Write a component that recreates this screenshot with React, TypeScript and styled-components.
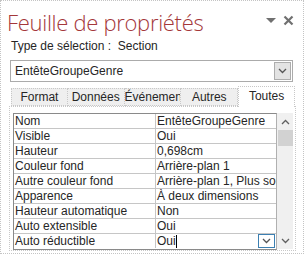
import React from "react";
import styled, { createGlobalStyle } from "styled-components";

const Global = createGlobalStyle`
  html, body { margin: 0; padding: 0; background: #ffffff; }
  body { font-family: "Liberation Sans", Arial, sans-serif; }
`;

const Window = styled.div`
  box-sizing: border-box;
  width: 304px;
  height: 254px;
  border: 1px dotted #c4c4c4;
  background: #ffffff;
  display: flex;
  flex-direction: column;
  color: #262626;
`;

const Header = styled.div`
  display: flex;
  align-items: flex-start;
  justify-content: space-between;
  padding: 8px 9px 0 6px;
  height: 27px;
`;

const Title = styled.div`
  font-family: "Open Sans", "Liberation Sans", sans-serif;
  font-weight: 300;
  font-size: 22px;
  line-height: 26px;
  color: #a4373a;
  letter-spacing: -0.3px;
  white-space: nowrap;
`;

const HeaderIcons = styled.div`
  display: flex;
  align-items: center;
  gap: 7px;
  padding-top: 6px;
`;

const SelType = styled.div`
  font-size: 12px;
  line-height: 14px;
  padding-left: 10px;
  margin-top: 3px;
  white-space: pre;
`;

const Combo = styled.div`
  box-sizing: border-box;
  margin: 7px 10px 0 9px;
  height: 22px;
  border: 1px solid #ababab;
  display: flex;
  align-items: center;
  padding: 0 1px 0 4px;
`;

const ComboText = styled.div`
  flex: 1;
  font-size: 12px;
`;

const ComboButton = styled.div`
  box-sizing: border-box;
  width: 17px;
  height: 18px;
  background: #e3e3e3;
  border: 1px solid #adadad;
  display: flex;
  align-items: center;
  justify-content: center;
`;

const TabStrip = styled.div`
  display: flex;
  margin: 4px 8px 0 10px;
  height: 20px;
  align-items: flex-end;
`;

const Tab = styled.div<{ $active?: boolean }>`
  box-sizing: border-box;
  width: 57px;
  height: ${(p) => (p.$active ? "21px" : "18px")};
  margin-bottom: ${(p) => (p.$active ? "-1px" : "0")};
  background: ${(p) => (p.$active ? "#ffffff" : "#efefef")};
  border: 1px dotted #c8c8c8;
  border-bottom: ${(p) => (p.$active ? "none" : "1px dotted #c8c8c8")};
  border-left: ${(p) => (p.$active ? "1px dotted #c8c8c8" : "none")};
  font-size: 12px;
  line-height: ${(p) => (p.$active ? "18px" : "16px")};
  text-align: center;
  white-space: nowrap;
  overflow: hidden;
  position: relative;
  z-index: ${(p) => (p.$active ? 1 : 0)};
  &:first-child { border-left: 1px dotted #c8c8c8; }
`;

const Panel = styled.div`
  box-sizing: border-box;
  margin: 0 7px 0 8px;
  height: 145px;
  border: 1px dotted #c8c8c8;
  padding: 6px 2px 0 3px;
  display: flex;
`;

const PropTable = styled.div`
  box-sizing: border-box;
  width: 265px;
  height: 137px;
  border: 1px solid #8a8a8a;
  border-right: 1px solid #b0b0b0;
  display: flex;
  flex-direction: column;
`;

const Row = styled.div`
  box-sizing: border-box;
  display: grid;
  grid-template-columns: 141px 1fr;
  height: 15px;
  flex: none;
  border-bottom: 1px solid #c6c6c6;
  &:last-child { border-bottom: none; height: 14px; }
`;

const Cell = styled.div<{ $value?: boolean }>`
  font-size: 12px;
  line-height: 14px;
  padding-left: 1px;
  white-space: nowrap;
  overflow: hidden;
  border-left: ${(p) => (p.$value ? "1px solid #c6c6c6" : "none")};
  display: flex;
  align-items: center;
  position: relative;
`;

const Caret = styled.span`
  display: inline-block;
  width: 1px;
  height: 13px;
  background: #000;
`;

const CellButton = styled.div`
  position: absolute;
  right: 1px;
  top: 0;
  box-sizing: border-box;
  width: 17px;
  height: 14px;
  border: 1px solid #3c7fb1;
  background: #ffffff;
  display: flex;
  align-items: center;
  justify-content: center;
`;

const ScrollBar = styled.div`
  width: 16px;
  height: 136px;
  background: #f0f0f0;
  display: flex;
  flex-direction: column;
  align-items: center;
`;

const ScrollArrow = styled.div`
  height: 17px;
  width: 16px;
  display: flex;
  align-items: center;
  justify-content: center;
`;

const Thumb = styled.div`
  width: 15px;
  height: 16px;
  background: #d2d2d2;
`;

const ScrollSpace = styled.div`
  flex: 1;
`;

const rows: [string, string][] = [
  ["Nom", "EntêteGroupeGenre"],
  ["Visible", "Oui"],
  ["Hauteur", "0,698cm"],
  ["Couleur fond", "Arrière-plan 1"],
  ["Autre couleur fond", "Arrière-plan 1, Plus sombre 5 %"],
  ["Apparence", "À deux dimensions"],
  ["Hauteur automatique", "Non"],
  ["Auto extensible", "Oui"],
  ["Auto réductible", "Oui"],
];

const tabs = ["Format", "Données", "Événement", "Autres", "Toutes"];

const Chevron = ({ up, color = "#444" }: { up?: boolean; color?: string }) => (
  <svg width="9" height="6" viewBox="0 0 9 6">
    <polyline
      points={up ? "1,5 4.5,1.5 8,5" : "1,1 4.5,4.5 8,1"}
      fill="none"
      stroke={color}
      strokeWidth="1.3"
    />
  </svg>
);

export default function App() {
  return (
    <>
      <Global />
      <Window>
        <Header>
          <Title>Feuille de propriétés</Title>
          <HeaderIcons>
            <svg width="10" height="6" viewBox="0 0 10 6">
              <polygon points="0,0 10,0 5,5" fill="#707070" />
            </svg>
            <svg width="11" height="11" viewBox="0 0 11 11">
              <path d="M1.5 1.5 L9.5 9.5 M9.5 1.5 L1.5 9.5" stroke="#707070" strokeWidth="2.2" />
            </svg>
          </HeaderIcons>
        </Header>
        <SelType>Type de sélection :  Section</SelType>
        <Combo>
          <ComboText>EntêteGroupeGenre</ComboText>
          <ComboButton>
            <Chevron color="#555" />
          </ComboButton>
        </Combo>
        <TabStrip>
          {tabs.map((t) => (
            <Tab key={t} $active={t === "Toutes"}>
              {t}
            </Tab>
          ))}
        </TabStrip>
        <Panel>
          <PropTable>
            {rows.map(([k, v], i) => (
              <Row key={k}>
                <Cell>{k}</Cell>
                <Cell $value>
                  {v}
                  {i === rows.length - 1 && <Caret />}
                  {i === rows.length - 1 && (
                    <CellButton>
                      <Chevron color="#555" />
                    </CellButton>
                  )}
                </Cell>
              </Row>
            ))}
          </PropTable>
          <ScrollBar>
            <ScrollArrow>
              <Chevron up color="#606060" />
            </ScrollArrow>
            <Thumb />
            <ScrollSpace />
            <ScrollArrow>
              <Chevron color="#606060" />
            </ScrollArrow>
          </ScrollBar>
        </Panel>
      </Window>
    </>
  );
}
